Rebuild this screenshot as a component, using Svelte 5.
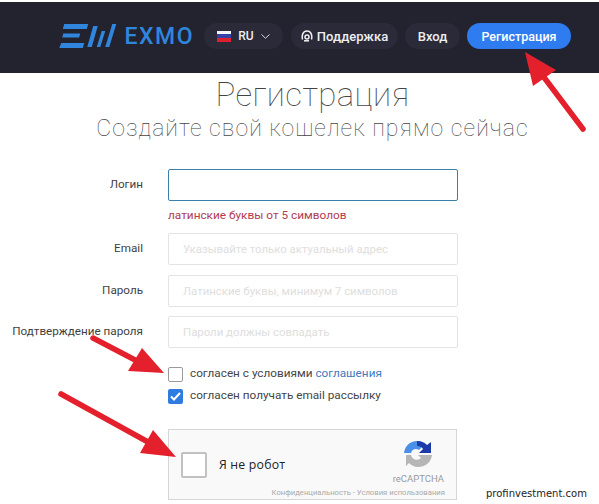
<script lang="ts">
	const fields = [
		{ label: 'Email', hint: 'Указывайте только актуальный адрес' },
		{ label: 'Пароль', hint: 'Латинские буквы, минимум 7 символов' },
		{ label: 'Подтверждение пароля', hint: 'Пароли должны совпадать' }
	];
	// стрелки поверх формы: линия от хвоста к голове и сам наконечник
	const arrows = [
		{ line: [583, 129, 543, 76], head: '525,52 533,86 556,70' },
		{ line: [93, 338, 137, 361], head: '164,373 128,371 142,348' },
		{ line: [61, 394, 148, 442], head: '176,457 140,453 153,430' }
	];
</script>

<div class="page">
	<header class="top">
		<div class="logo">
			<svg width="58" height="26" viewBox="0 0 57 26" fill="#2f86dc">
				<path d="M5 1H29L27.500 6H3.500ZM4 10.500H21L19.800 14.500H3ZM2 20H25L23.500 25H0Z" />
				<path d="M34 3H38.500L32.500 24H28ZM42.500 8H46L41 24H37.500ZM53 1H57L50 24H46Z" />
			</svg>
			<span>EXMO</span>
		</div>
		<div class="pill lang">
			<span class="flag"><i></i><i></i><i></i></span>
			RU
			<svg width="9" height="5" viewBox="0 0 9 5" fill="none" stroke="#d5d6dc" stroke-width="1">
				<path d="M.5.500 4.500 4.200 8.500.500" />
			</svg>
		</div>
		<div class="pill support">
			<svg width="12" height="12" viewBox="0 0 12 12" fill="none" stroke="#f0f0f4" stroke-width="1.500">
				<path d="M1.500 9.500C.5 5 2 1 6 1s5.500 4 4.500 8.500" />
				<circle cx="6" cy="7" r="2" />
				<path d="M3 10.800H8" />
			</svg>
			Поддержка
		</div>
		<div class="pill enter">Вход</div>
		<div class="pill register">Регистрация</div>
	</header>

	<h1>Регистрация</h1>
	<h2>Создайте свой кошелек прямо сейчас</h2>

	<form class="form">
		<label class="row">
			<span class="name">Логин</span>
			<input class="active" type="text" />
		</label>
		<div class="error">латинские буквы от 5 символов</div>
		{#each fields as f (f.label)}
			<label class="row">
				<span class="name">{f.label}</span>
				<input type="text" placeholder={f.hint} />
			</label>
		{/each}

		<div class="agree first">
			<span class="box"></span>
			<span>согласен с условиями <a href="#terms">соглашения</a></span>
		</div>
		<div class="agree">
			<span class="box checked">
				<svg width="11" height="9" viewBox="0 0 11 9" fill="none" stroke="#fff" stroke-width="2">
					<path d="M1 4.500 4 7.500 10 1" />
				</svg>
			</span>
			<span>согласен получать email рассылку</span>
		</div>

		<div class="captcha">
			<span class="robot-box"></span>
			<span class="robot">Я не робот</span>
			<div class="brand">
				<svg width="30" height="28" viewBox="0 0 30 28">
					<path d="M1 13C2 5 8 1 14 1c3 0 6 1 8 3l-6 6c-3-2-7-1-8 3Z" fill="#4a90e8" />
					<path d="M14 1c4 0 7 1 10 4l4-3v11H16l4-4c-1-2-3-3-6-3Z" fill="#1c3aa9" />
					<path d="M1 15H8c1 5 7 6 10 3l-3-3H29c-1 8-7 12-14 12-4 0-7-2-9-4l-3 3V15Z" fill="#b6b6b6" />
				</svg>
				<span>reCAPTCHA</span>
			</div>
			<div class="legal">Конфиденциальность - Условия использования</div>
		</div>
	</form>

	<div class="watermark">profinvestment.com</div>

	<svg class="arrows" width="599" height="504" viewBox="0 0 599 504">
		{#each arrows as a, i (i)}
			<line x1={a.line[0]} y1={a.line[1]} x2={a.line[2]} y2={a.line[3]} stroke="#e3202c" stroke-width="5.500" stroke-linecap="round" />
			<polygon points={a.head} fill="#e3202c" />
		{/each}
	</svg>
</div>

<style>
	:global(body) {
		margin: 0;
		background: #fff;
	}
	.page {
		position: relative;
		width: 599px;
		height: 504px;
		overflow: hidden;
		padding-top: 2px;
		box-sizing: border-box;
		font-family: Roboto, sans-serif;
		color: #333;
	}
	.top {
		height: 71px;
		background: #23232f;
		box-sizing: border-box;
		padding: 21px 0 0 59px;
		display: flex;
		align-items: flex-start;
		gap: 8px;
	}
	.logo {
		display: flex;
		align-items: center;
		gap: 8px;
		width: 135px;
		height: 26px;
		margin-right: 2px;
		color: #2f86dc;
		font: 500 23px Roboto, sans-serif;
		letter-spacing: 1.500px;
	}
	.pill {
		height: 26px;
		border-radius: 13px;
		background: #2a2a38;
		color: #eeeef2;
		font-size: 12.500px;
		font-weight: 500;
		display: flex;
		align-items: center;
		justify-content: center;
		box-sizing: border-box;
	}
	.lang {
		width: 79px;
		gap: 7px;
		font-size: 12px;
	}
	.flag {
		width: 14px;
		height: 11px;
		display: flex;
		flex-direction: column;
	}
	.flag i {
		flex: 1;
		background: #f4f4f8;
	}
	.flag i:nth-child(2) {
		background: #3440a8;
	}
	.flag i:nth-child(3) {
		background: #dc2030;
	}
	.support {
		width: 107px;
		gap: 4px;
		font-size: 13px;
	}
	.enter {
		width: 55px;
		margin-left: -1px;
		font-size: 13px;
	}
	.register {
		width: 104px;
		background: #2f7cf0;
		color: #fff;
		margin-left: -1px;
	}
	h1 {
		margin: 3px 0 0;
		text-align: center;
		font: 100 33px/38px Roboto, sans-serif;
		color: #444;
		transform: translateX(13px);
		letter-spacing: 0.4px;
	}
	h2 {
		margin: 1px 0 0;
		text-align: center;
		font: 100 23px/28px Roboto, sans-serif;
		color: #444;
		letter-spacing: 1.050px;
		transform: translateX(13px);
	}
	.form {
		margin-top: 26px;
		font-size: 12px;
	}
	.row {
		display: grid;
		grid-template-columns: 143px 290px;
		column-gap: 25px;
		margin-bottom: 9.500px;
	}
	.name {
		text-align: right;
		line-height: 30px;
		font-size: 11.700px;
		color: #3f3f3f;
	}
	input {
		height: 32px;
		width: 290px;
		box-sizing: border-box;
		padding: 0 14px;
		border: 1px solid #e3e3e3;
		border-radius: 2px;
		outline: none;
		background: #fff;
		font: 11.400px Roboto, sans-serif;
	}
	input::placeholder {
		color: #dedede;
	}
	input.active {
		border: 1px solid #3c7fa8;
	}
	.row:first-child {
		margin-bottom: 6px;
	}
	.error {
		margin: 0 0 10px 168px;
		font-size: 11.800px;
		line-height: 16px;
		color: #b33a50;
	}
	.agree {
		margin-left: 168px;
		display: flex;
		align-items: flex-start;
		gap: 7px;
		height: 15px;
		line-height: 12px;
		margin-top: 7px;
		font-size: 11.750px;
		color: #444;
	}
	.agree.first {
		margin-top: 19px;
	}
	.agree a {
		color: #3f78bd;
		text-decoration: none;
	}
	.box {
		width: 15px;
		height: 15px;
		box-sizing: border-box;
		border: 1px solid #9a9a9a;
		border-radius: 2px;
		flex: none;
	}
	.box.checked {
		border: none;
		background: #2f7ce0;
		display: flex;
		align-items: center;
		justify-content: center;
	}
	.captcha {
		position: relative;
		margin: 25px 0 0 168px;
		width: 289px;
		height: 71px;
		box-sizing: border-box;
		background: #f9f9f9;
		border: 1px solid #d6d6d6;
		display: flex;
		align-items: center;
		padding: 0 0 0 12px;
	}
	.robot-box {
		width: 26px;
		height: 26px;
		box-sizing: border-box;
		border: 2px solid #c1c1c1;
		border-radius: 2px;
		background: #fff;
		margin-right: 12px;
	}
	.robot {
		font: 12.300px "Open Sans", Roboto, sans-serif;
		color: #222;
		letter-spacing: 0.2px;
	}
	.brand {
		position: absolute;
		right: 12px;
		top: 10px;
		display: flex;
		flex-direction: column;
		align-items: center;
		gap: 5px;
		color: #999;
		font-size: 9.500px;
	}
	.legal {
		position: absolute;
		right: 11px;
		bottom: 2px;
		font-size: 7.700px;
		color: #aaa;
	}
	.watermark {
		position: absolute;
		left: 486px;
		top: 488px;
		font: 10px "DejaVu Sans", sans-serif;
		color: #222;
	}
	.arrows {
		position: absolute;
		left: 0;
		top: 0;
		pointer-events: none;
	}
</style>
